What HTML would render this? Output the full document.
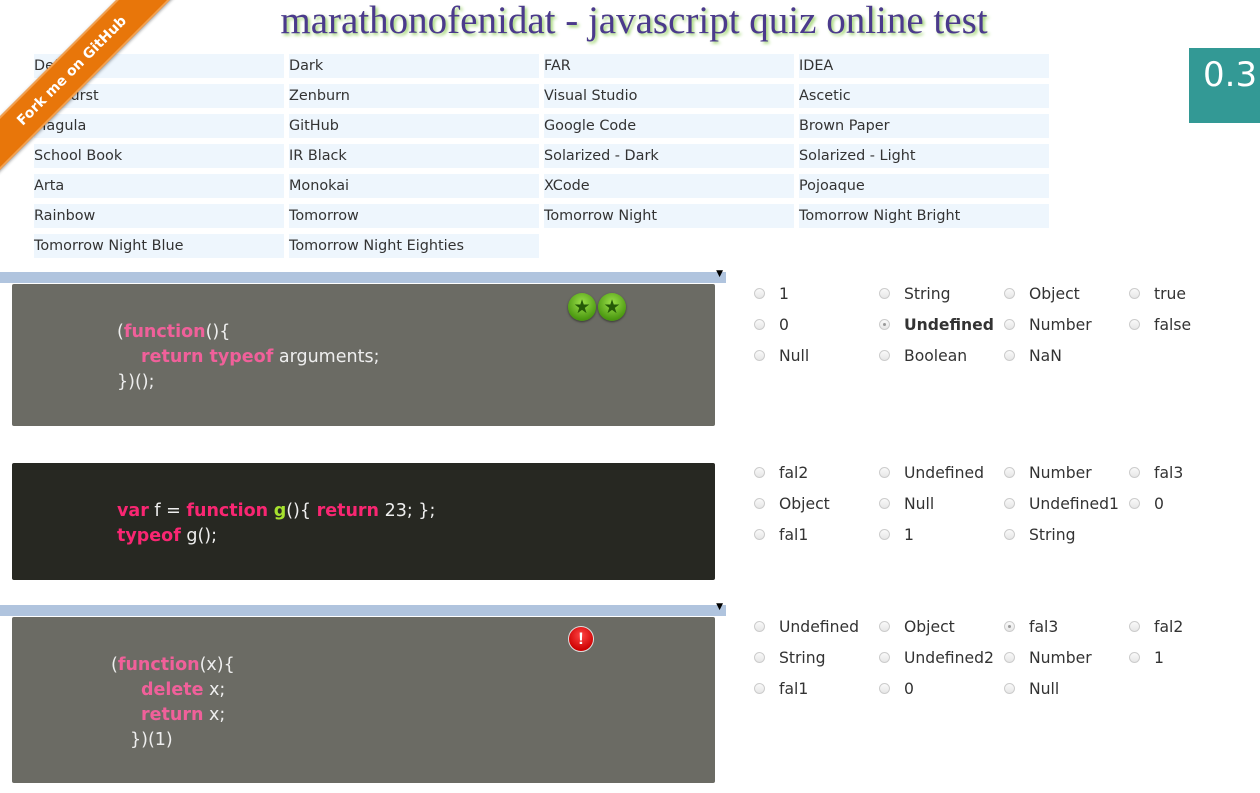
<!DOCTYPE html>
<html><head><meta charset="utf-8"><style>
body{margin:0;width:1260px;height:793px;overflow:hidden;background:#fff;position:relative;font-family:"DejaVu Sans","Liberation Sans",sans-serif;}
.a{position:absolute}
h1{position:absolute;left:0;width:1268px;top:-2px;margin:0;text-align:center;font:39px "Liberation Serif",serif;color:#4b3a8c;text-shadow:2px 2px 3px #9bd36a;}
.t{position:absolute;width:250px;height:24px;background:#eef6fd;font-size:14.4px;color:#333;line-height:25px;}
.bar{position:absolute;left:0;width:726px;height:11px;background:#b0c4de}
.bar span{position:absolute;right:3px;top:-3px;font-size:9px;color:#000}
.code{position:absolute;left:12px;width:703px;border-radius:2px;color:#eee;font-size:17.5px;line-height:25px;white-space:pre;box-sizing:border-box}
.code div{height:25px}
.k{color:#f0609a;font-weight:bold}
.k2{color:#f92672;font-weight:bold}
.g{color:#a6e22e;font-weight:bold}
.o{position:absolute;font-size:15.6px;color:#333;line-height:20px}
.o i{position:absolute;left:-25px;top:4px;width:11px;height:11px;border-radius:50%;border:1px solid #ccc;background:linear-gradient(#fafafa,#e6e6e6);box-sizing:border-box}
.o i.c::after{content:"";position:absolute;left:3px;top:3px;width:3px;height:3px;border-radius:50%;background:#999}
.star{position:absolute;width:28px;height:28px;border-radius:50%;background:radial-gradient(circle at 50% 35%,#9be04a,#4d9a12 70%,#3a7a0c);box-shadow:0 1px 2px rgba(0,0,0,.5);color:#255a08;font-size:19px;text-align:center;line-height:28px}
</style></head><body>
<h1>marathonofenidat - javascript quiz online test</h1>

<div class="t" style="left:34px;top:54px">Default</div><div class="t" style="left:289px;top:54px">Dark</div><div class="t" style="left:544px;top:54px">FAR</div><div class="t" style="left:799px;top:54px">IDEA</div>
<div class="t" style="left:34px;top:84px">Sunburst</div><div class="t" style="left:289px;top:84px">Zenburn</div><div class="t" style="left:544px;top:84px">Visual Studio</div><div class="t" style="left:799px;top:84px">Ascetic</div>
<div class="t" style="left:34px;top:114px">Magula</div><div class="t" style="left:289px;top:114px">GitHub</div><div class="t" style="left:544px;top:114px">Google Code</div><div class="t" style="left:799px;top:114px">Brown Paper</div>
<div class="t" style="left:34px;top:144px">School Book</div><div class="t" style="left:289px;top:144px">IR Black</div><div class="t" style="left:544px;top:144px">Solarized - Dark</div><div class="t" style="left:799px;top:144px">Solarized - Light</div>
<div class="t" style="left:34px;top:174px">Arta</div><div class="t" style="left:289px;top:174px">Monokai</div><div class="t" style="left:544px;top:174px">XCode</div><div class="t" style="left:799px;top:174px">Pojoaque</div>
<div class="t" style="left:34px;top:204px">Rainbow</div><div class="t" style="left:289px;top:204px">Tomorrow</div><div class="t" style="left:544px;top:204px">Tomorrow Night</div><div class="t" style="left:799px;top:204px">Tomorrow Night Bright</div>
<div class="t" style="left:34px;top:234px">Tomorrow Night Blue</div><div class="t" style="left:289px;top:234px">Tomorrow Night Eighties</div>

<div class="a" style="left:-78px;top:52px;width:300px;height:38px;background:#e8760a;transform:rotate(-45deg);transform-origin:50% 50%;box-shadow:0 1px 3px rgba(0,0,0,.4);color:#fff;font:bold 14px 'DejaVu Sans',sans-serif;text-align:center;line-height:34px;border-top:2px solid #f2a050;border-bottom:2px solid #f2a050;box-sizing:border-box">Fork me on GitHub</div>

<div class="a" style="left:1189px;top:48px;width:71px;height:75px;background:#339995;color:#fff;font-size:34px;line-height:54px;padding-left:14px;box-sizing:border-box">0.3</div>

<div class="bar" style="top:272px"><span>▼</span></div>
<div class="code" style="top:284px;height:142px;background:#6b6b64;padding:36px 0 0 105px"><div>(<span class="k">function</span>(){</div><div style="margin-left:24px"><span class="k">return typeof</span> arguments;</div><div>})();</div></div>
<div class="star" style="left:568px;top:293px">★</div><div class="star" style="left:598px;top:293px">★</div>

<div class="code" style="top:463px;height:117px;background:#272822;padding:36px 0 0 105px"><div><span class="k2">var</span> f = <span class="k2">function</span> <span class="g">g</span>(){ <span class="k2">return</span> 23; };</div><div><span class="k2">typeof</span> g();</div></div>

<div class="bar" style="top:605px"><span>▼</span></div>
<div class="code" style="top:617px;height:166px;background:#6b6b64;padding:36px 0 0 99px"><div>(<span class="k">function</span>(x){</div><div style="margin-left:30px"><span class="k">delete</span> x;</div><div style="margin-left:30px"><span class="k">return</span> x;</div><div style="margin-left:19px">})(1)</div></div>
<div class="a" style="left:568px;top:626px;width:26px;height:26px;border-radius:50%;background:radial-gradient(circle at 50% 35%,#f44,#c00 75%);border:1px solid #ddd;box-sizing:border-box;color:#fff;font:bold 17px sans-serif;text-align:center;line-height:24px">!</div>

<div class="o" style="left:779px;top:284px"><i></i>1</div><div class="o" style="left:904px;top:284px"><i></i>String</div><div class="o" style="left:1029px;top:284px"><i></i>Object</div><div class="o" style="left:1154px;top:284px"><i></i>true</div>
<div class="o" style="left:779px;top:315px"><i></i>0</div><div class="o" style="left:904px;top:315px;font-weight:bold"><i class="c"></i>Undefined</div><div class="o" style="left:1029px;top:315px"><i></i>Number</div><div class="o" style="left:1154px;top:315px"><i></i>false</div>
<div class="o" style="left:779px;top:346px"><i></i>Null</div><div class="o" style="left:904px;top:346px"><i></i>Boolean</div><div class="o" style="left:1029px;top:346px"><i></i>NaN</div>

<div class="o" style="left:779px;top:463px"><i></i>fal2</div><div class="o" style="left:904px;top:463px"><i></i>Undefined</div><div class="o" style="left:1029px;top:463px"><i></i>Number</div><div class="o" style="left:1154px;top:463px"><i></i>fal3</div>
<div class="o" style="left:779px;top:494px"><i></i>Object</div><div class="o" style="left:904px;top:494px"><i></i>Null</div><div class="o" style="left:1029px;top:494px"><i></i>Undefined1</div><div class="o" style="left:1154px;top:494px"><i></i>0</div>
<div class="o" style="left:779px;top:525px"><i></i>fal1</div><div class="o" style="left:904px;top:525px"><i></i>1</div><div class="o" style="left:1029px;top:525px"><i></i>String</div>

<div class="o" style="left:779px;top:617px"><i></i>Undefined</div><div class="o" style="left:904px;top:617px"><i></i>Object</div><div class="o" style="left:1029px;top:617px"><i class="c"></i>fal3</div><div class="o" style="left:1154px;top:617px"><i></i>fal2</div>
<div class="o" style="left:779px;top:648px"><i></i>String</div><div class="o" style="left:904px;top:648px"><i></i>Undefined2</div><div class="o" style="left:1029px;top:648px"><i></i>Number</div><div class="o" style="left:1154px;top:648px"><i></i>1</div>
<div class="o" style="left:779px;top:679px"><i></i>fal1</div><div class="o" style="left:904px;top:679px"><i></i>0</div><div class="o" style="left:1029px;top:679px"><i></i>Null</div>
</body></html>
